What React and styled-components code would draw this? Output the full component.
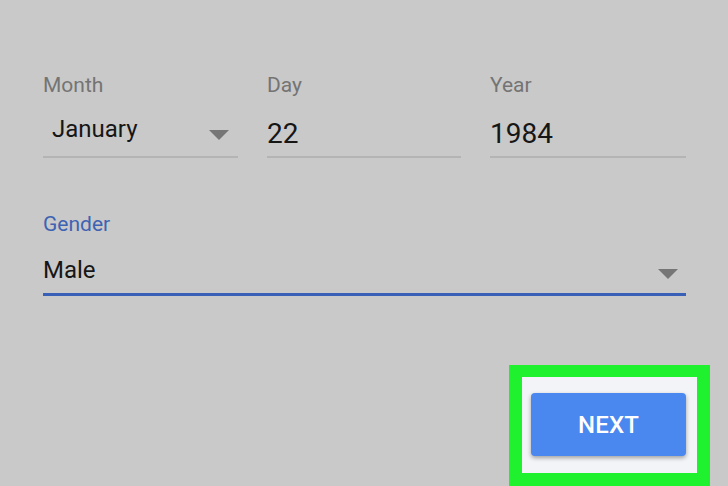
import React from "react";
import styled, { createGlobalStyle } from "styled-components";

const GlobalStyle = createGlobalStyle`
  html, body {
    margin: 0;
    padding: 0;
    background: #c9c9c9;
    font-family: Roboto, "Liberation Sans", Arial, sans-serif;
  }
  #root {
    height: 486px;
    overflow: hidden;
  }
`;

const Page = styled.div`
  width: 728px;
  height: 486px;
  box-sizing: border-box;
  padding: 75px 0 0 0;
  display: flex;
  flex-direction: column;
`;

const Form = styled.div`
  padding: 0 42px 0 43px;
  display: flex;
  flex-direction: column;
`;

const DateRow = styled.div`
  display: grid;
  grid-template-columns: 195px 194px 196px;
  column-gap: 29px;
`;

const Field = styled.div`
  display: flex;
  flex-direction: column;
  margin-top: ${(p) => p.$top || 0}px;
`;

const Label = styled.div`
  font-size: 21px;
  line-height: 21px;
  height: 21px;
  color: ${(p) => (p.$active ? "#3e63b3" : "#747474")};
`;

const ValueRow = styled.div`
  height: ${(p) => p.$height}px;
  display: flex;
  align-items: flex-start;
  justify-content: space-between;
  border-bottom: ${(p) => (p.$active ? "3px solid #3760b6" : "2px solid #b4b4b4")};
  padding: 0 ${(p) => p.$padRight || 0}px 0 ${(p) => p.$padLeft || 0}px;
`;

const Value = styled.span`
  font-size: ${(p) => p.$size}px;
  line-height: ${(p) => p.$size}px;
  margin-top: ${(p) => p.$top}px;
  color: #161616;
`;

const Arrow = styled.span`
  width: 0;
  height: 0;
  margin-top: ${(p) => p.$top}px;
  border-left: 10.5px solid transparent;
  border-right: 10.5px solid transparent;
  border-top: 10px solid #767676;
`;

const Footer = styled.div`
  margin-top: 69px;
  display: flex;
  justify-content: flex-end;
  padding-right: 18px;
`;

const Highlight = styled.div`
  border: 13px solid #1ff12f;
  border-top-width: 12px;
  background: #f2f4f7;
  padding: 16px 11px 17px 9px;
  display: flex;
`;

const NextButton = styled.button`
  width: 155px;
  height: 63px;
  border: none;
  border-radius: 4px;
  background: #4a87ef;
  color: #ffffff;
  font-family: Roboto, "Liberation Sans", Arial, sans-serif;
  font-size: 24px;
  font-weight: 500;
  letter-spacing: 0.2px;
  box-shadow: 0 2px 4px rgba(0, 0, 0, 0.35);
  cursor: pointer;
`;

export default function App() {
  return (
    <>
      <GlobalStyle />
      <Page>
        <Form>
          <DateRow>
            <Field>
              <Label>Month</Label>
              <ValueRow $height={60} $padLeft={9} $padRight={9}>
                <Value $size={24} $top={21}>
                  January
                </Value>
                <Arrow $top={34} />
              </ValueRow>
            </Field>
            <Field>
              <Label>Day</Label>
              <ValueRow $height={60}>
                <Value $size={28} $top={24}>
                  22
                </Value>
              </ValueRow>
            </Field>
            <Field>
              <Label>Year</Label>
              <ValueRow $height={60}>
                <Value $size={28} $top={24}>
                  1984
                </Value>
              </ValueRow>
            </Field>
          </DateRow>
          <Field $top={56}>
            <Label $active>Gender</Label>
            <ValueRow $height={58} $active $padRight={8}>
              <Value $size={24} $top={23}>
                Male
              </Value>
              <Arrow $top={34} />
            </ValueRow>
          </Field>
        </Form>
        <Footer>
          <Highlight>
            <NextButton>NEXT</NextButton>
          </Highlight>
        </Footer>
      </Page>
    </>
  );
}
